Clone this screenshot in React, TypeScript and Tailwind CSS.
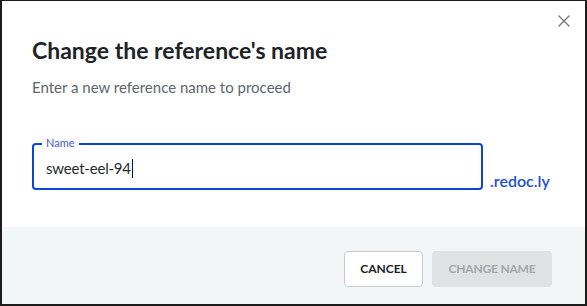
import { X } from 'lucide-react';

export default function App() {
  return (
    <div className="w-[587px] h-[306px] bg-white border-2 border-t border-[#1c1c1c] flex flex-col font-['Lato',sans-serif] relative overflow-hidden">
      <button className="absolute top-[10px] right-[11px] text-[#7a7a7a]">
        <X className="w-[20px] h-[20px]" strokeWidth={1.6} />
      </button>

      {/* Body */}
      <div className="flex-1 px-[30px] pt-[34px]">
        <h2 className="text-[23px] font-bold text-[#1e2327] leading-[30px]">Change the reference's name</h2>
        <p className="mt-[12px] text-[15px] text-[#5c6670] leading-[20px]">Enter a new reference name to proceed</p>

        <div className="mt-[46px] flex items-end gap-[7px]">
          <div className="relative w-[451px] h-[47px] border-2 border-[#0b47d4] rounded-[4px] flex items-center px-[12px] pt-[4px]">
            <span className="absolute -top-[9px] left-[8px] px-[4px] bg-white text-[11px] leading-[14px] text-[#4257d6]">Name</span>
            <span className="text-[15px] text-[#232a30] tracking-[-0.2px]">sweet-eel-94</span>
            <span className="w-px h-[19px] bg-[#111] ml-px" />
          </div>
          <span className="text-[16px] font-semibold text-[#1f50d0] leading-[20px] mb-[-1px]">.redoc.ly</span>
        </div>
      </div>

      {/* Footer */}
      <div className="h-[77px] bg-[#f3f6f7] flex items-start justify-end gap-[9px] pt-[24px] pr-[33px]">
        <button className="w-[79px] h-[36px] bg-white border border-[#c7cacc] rounded-[4px] text-[12px] font-bold text-[#1b2125]">
          CANCEL
        </button>
        <button className="w-[120px] h-[36px] bg-[#dfe1e2] rounded-[4px] text-[12px] font-bold text-[#a3a7aa] tracking-[-0.2px]">
          CHANGE NAME
        </button>
      </div>
    </div>
  );
}
